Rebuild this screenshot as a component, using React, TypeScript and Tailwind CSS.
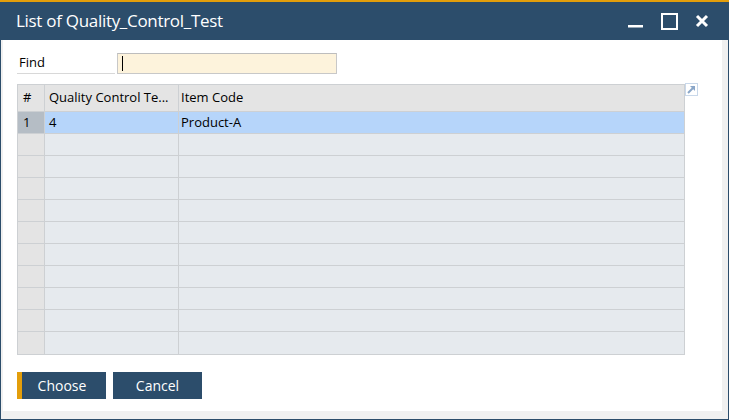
import { Fragment } from 'react'

const rows = Array.from({ length: 11 }, (_, i) => i)

export default function App() {
  return (
    <div
      className="w-[729px] h-[420px] flex flex-col bg-[#2c4d6b] border-t-2 border-[#e39e0b] overflow-hidden"
      style={{ fontFamily: '"Open Sans", "Noto Sans", sans-serif' }}
    >
      <div className="h-[38px] flex items-center justify-between pl-4 pr-[20px] shrink-0">
        <span className="text-[17px] text-white tracking-[-0.3px]">List of Quality_Control_Test</span>
        <div className="flex items-center gap-[17px]">
          <svg width="16" height="16" viewBox="0 0 16 16">
            <rect x="0" y="12" width="15" height="2.5" fill="white" />
          </svg>
          <svg width="17" height="17" viewBox="0 0 17 17">
            <rect x="1" y="1" width="15" height="15" fill="none" stroke="white" strokeWidth="2" />
          </svg>
          <svg width="14" height="14" viewBox="0 0 14 14">
            <path d="M2 2 L12 12 M12 2 L2 12" stroke="white" strokeWidth="3" />
          </svg>
        </div>
      </div>

      <div className="flex-1 mx-px mb-px bg-white flex">
        <div className="flex-1 bg-[#f0f0f0] pl-[2px] pr-[6px] pb-[8px] flex">
          <div className="flex-1 bg-white pl-[14px] pt-[12px] flex flex-col">
            <div className="flex items-center h-[22px]">
              <div className="w-[98px] h-[22px] flex items-center border-b border-[#d8d8d8] text-[13px] text-black pl-[2px]">
                Find
              </div>
              <div className="ml-[2px] w-[220px] h-[21px] bg-[#fdf3dc] border border-[#c8c8c8] border-t-[#bdbdbd] flex items-center pl-[4px]">
                <div className="w-px h-[15px] bg-black" />
              </div>
            </div>

            <div className="mt-[10px] flex items-start">
              <div className="w-[668px] border border-[#cdd0d3] grid grid-cols-[27px_134px_1fr] text-[13px] text-black">
                <div className="h-[27px] bg-[#e4e4e4] border-r border-b border-[#cdd0d3] pl-[5px] flex items-center">#</div>
                <div className="h-[27px] bg-[#e4e4e4] border-r border-b border-[#cdd0d3] pl-[4px] flex items-center whitespace-nowrap overflow-hidden">
                  Quality Control Te...
                </div>
                <div className="h-[27px] bg-[#e4e4e4] border-b border-[#cdd0d3] pl-[2px] flex items-center">Item Code</div>
                {rows.map((i) => (
                  <Fragment key={i}>
                    <div
                      className={`h-[22px] border-r border-[#cdd0d3] pl-[5px] flex items-center ${
                        i === 0 ? 'bg-[#b5bdc5]' : 'bg-[#e4e4e4]'
                      } ${i < 10 ? 'border-b' : ''}`}
                    >
                      {i === 0 ? '1' : ''}
                    </div>
                    <div
                      className={`h-[22px] border-r border-[#cdd0d3] pl-[4px] flex items-center ${
                        i === 0 ? 'bg-[#b6d5fa]' : 'bg-[#e6eaee]'
                      } ${i < 10 ? 'border-b' : ''}`}
                    >
                      {i === 0 ? '4' : ''}
                    </div>
                    <div
                      className={`h-[22px] border-[#cdd0d3] pl-[2px] flex items-center ${
                        i === 0 ? 'bg-[#b6d5fa]' : 'bg-[#e6eaee]'
                      } ${i < 10 ? 'border-b' : ''}`}
                    >
                      {i === 0 ? 'Product-A' : ''}
                    </div>
                  </Fragment>
                ))}
              </div>
              <svg width="13" height="13" viewBox="0 0 13 13" className="-mt-[1px]">
                <rect x="0.5" y="0.5" width="12" height="12" fill="white" stroke="#c9d8ea" />
                <path d="M3 10 L9.5 3.5" stroke="#8aa6c8" strokeWidth="2" />
                <path d="M5 3 L10 3 L10 8 Z" fill="#8aa6c8" />
              </svg>
            </div>

            <div className="mt-[17px] flex gap-[7px]">
              <button className="w-[89px] h-[27px] bg-[#2c4d6b] border-l-[5px] border-[#e39e0b] text-white text-[14px] flex items-center justify-center pr-[4px]">
                Choose
              </button>
              <button className="w-[89px] h-[27px] bg-[#2c4d6b] text-white text-[14px] flex items-center justify-center">
                Cancel
              </button>
            </div>
          </div>
        </div>
      </div>
    </div>
  )
}
